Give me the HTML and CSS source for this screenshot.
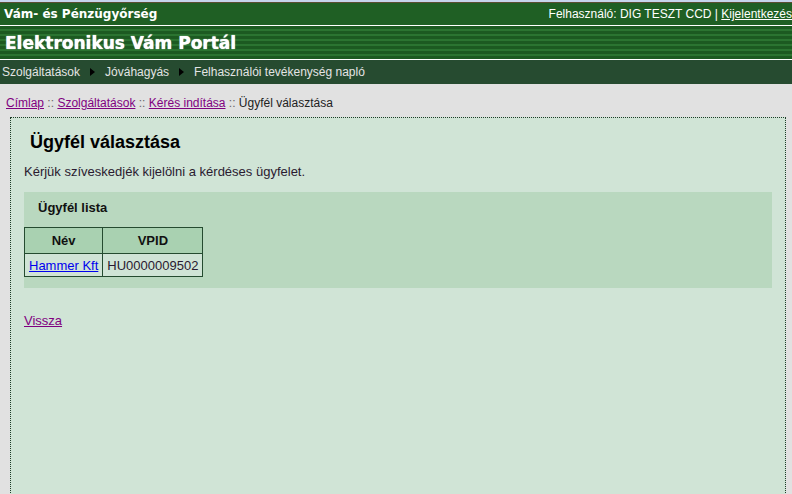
FILE: index.html
```html
<!DOCTYPE html>
<html lang="hu">
<head>
  <meta charset="UTF-8">
  <title>Elektronikus Vám Portál - Ügyfél választása</title>
  <link rel="stylesheet" href="styles.css">
</head>
<body>
  <div class="header">
    <div class="topbar">
      <span class="org">Vám- és Pénzügyőrség</span>
      <span class="user">Felhasználó: DIG TESZT CCD | <a href="#">Kijelentkezés</a></span>
    </div>
    <div class="portal">Elektronikus Vám Portál</div>
    <div class="nav">
      <span>Szolgáltatások</span>
      <span class="arrow"></span>
      <span>Jóváhagyás</span>
      <span class="arrow"></span>
      <span>Felhasználói tevékenység napló</span>
    </div>
  </div>

  <div class="crumbs">
    <a href="#">Címlap</a> <span class="sep">::</span>
    <a href="#">Szolgáltatások</a> <span class="sep">::</span>
    <a href="#">Kérés indítása</a> <span class="sep">::</span>
    Ügyfél választása
  </div>

  <div class="content">
    <h1>Ügyfél választása</h1>
    <p class="intro">Kérjük szíveskedjék kijelölni a kérdéses ügyfelet.</p>

    <div class="panel">
      <h2>Ügyfél lista</h2>
      <table class="list">
        <tr><th>Név</th><th>VPID</th></tr>
        <tr><td><a href="#">Hammer Kft</a></td><td>HU0000009502</td></tr>
      </table>
    </div>

    <a class="back" href="#">Vissza</a>
  </div>
</body>
</html>
```

FILE: styles.css
```css
* { box-sizing: border-box }
html, body { height: 100% }
body {
  margin: 0;
  background: #e1e1e1;
  border-top: 2px solid #c6d5ec;
  font-family: "Liberation Sans", Arial, sans-serif;
  font-size: 13px;
  color: #2a1a30;
  overflow: hidden;
}

/* header */
.header { border-top: 1px solid #5b4e32 }
.topbar {
  height: 23px;
  background: #1f5f24;
  border-bottom: 1px solid #fff;
  display: flex;
  align-items: center;
  justify-content: space-between;
  padding-left: 4px;
  color: #fff;
}
.org {
  font-family: "DejaVu Sans", Verdana, sans-serif;
  font-weight: bold;
  font-size: 12px;
}
.user {
  font-size: 12px;
  white-space: nowrap;
}
.user a { color: #fff }
.portal {
  height: 34px;
  border-bottom: 1px solid #fff;
  background: repeating-linear-gradient(#1c5a21 0 3px, #2b7431 3px 5px);
  display: flex;
  align-items: center;
  padding: 1px 0 0 5px;
  color: #fff;
  font-family: "DejaVu Sans", Verdana, sans-serif;
  font-weight: bold;
  font-size: 17px;
  text-shadow: 0 0 1px #fff;
}
.nav {
  height: 24px;
  background: #264b30;
  display: flex;
  align-items: center;
  gap: 9px;
  padding-left: 2px;
  color: #e4e4e4;
  font-size: 12px;
}
.arrow {
  width: 0;
  height: 0;
  border-top: 4px solid transparent;
  border-bottom: 4px solid transparent;
  border-left: 5px solid #000;
  margin: 0 1px;
}

/* breadcrumb */
.crumbs {
  margin: 12px 6px 7px;
  font-size: 12px;
  line-height: 14px;
  color: #222;
}
.crumbs a { color: #800080 }
.crumbs .sep { color: #666 }

/* content box */
.content {
  margin: 0 6px 0 10px;
  min-height: 420px;
  background: #d0e4d6;
  border: 1px dotted #1e3c28;
  padding: 14px 13px 0;
}
.content h1 {
  margin: 0 0 12px 6px;
  font-size: 18px;
  line-height: 20px;
  color: #000;
}
.intro {
  margin: 0 0 13px;
  line-height: 15px;
}
.panel {
  background: #b9d8bf;
  padding: 8px 14px 11px 0;
}
.panel h2 {
  margin: 0 0 11px 14px;
  font-size: 13px;
  line-height: 16px;
  color: #111;
}
.list {
  border-collapse: collapse;
  border: 1px solid #254b30;
}
.list th, .list td {
  border: 1px solid #254b30;
  padding: 4px 4px 3px;
  line-height: 15px;
  text-align: center;
}
.list th {
  background: #a9d1b1;
  color: #111;
  padding: 5px 4px;
}
.list td { background: #d0e4d6 }
.list td a { color: #0000ee }
.back {
  display: inline-block;
  margin-top: 26px;
  line-height: 14px;
  color: #800080;
}
```
